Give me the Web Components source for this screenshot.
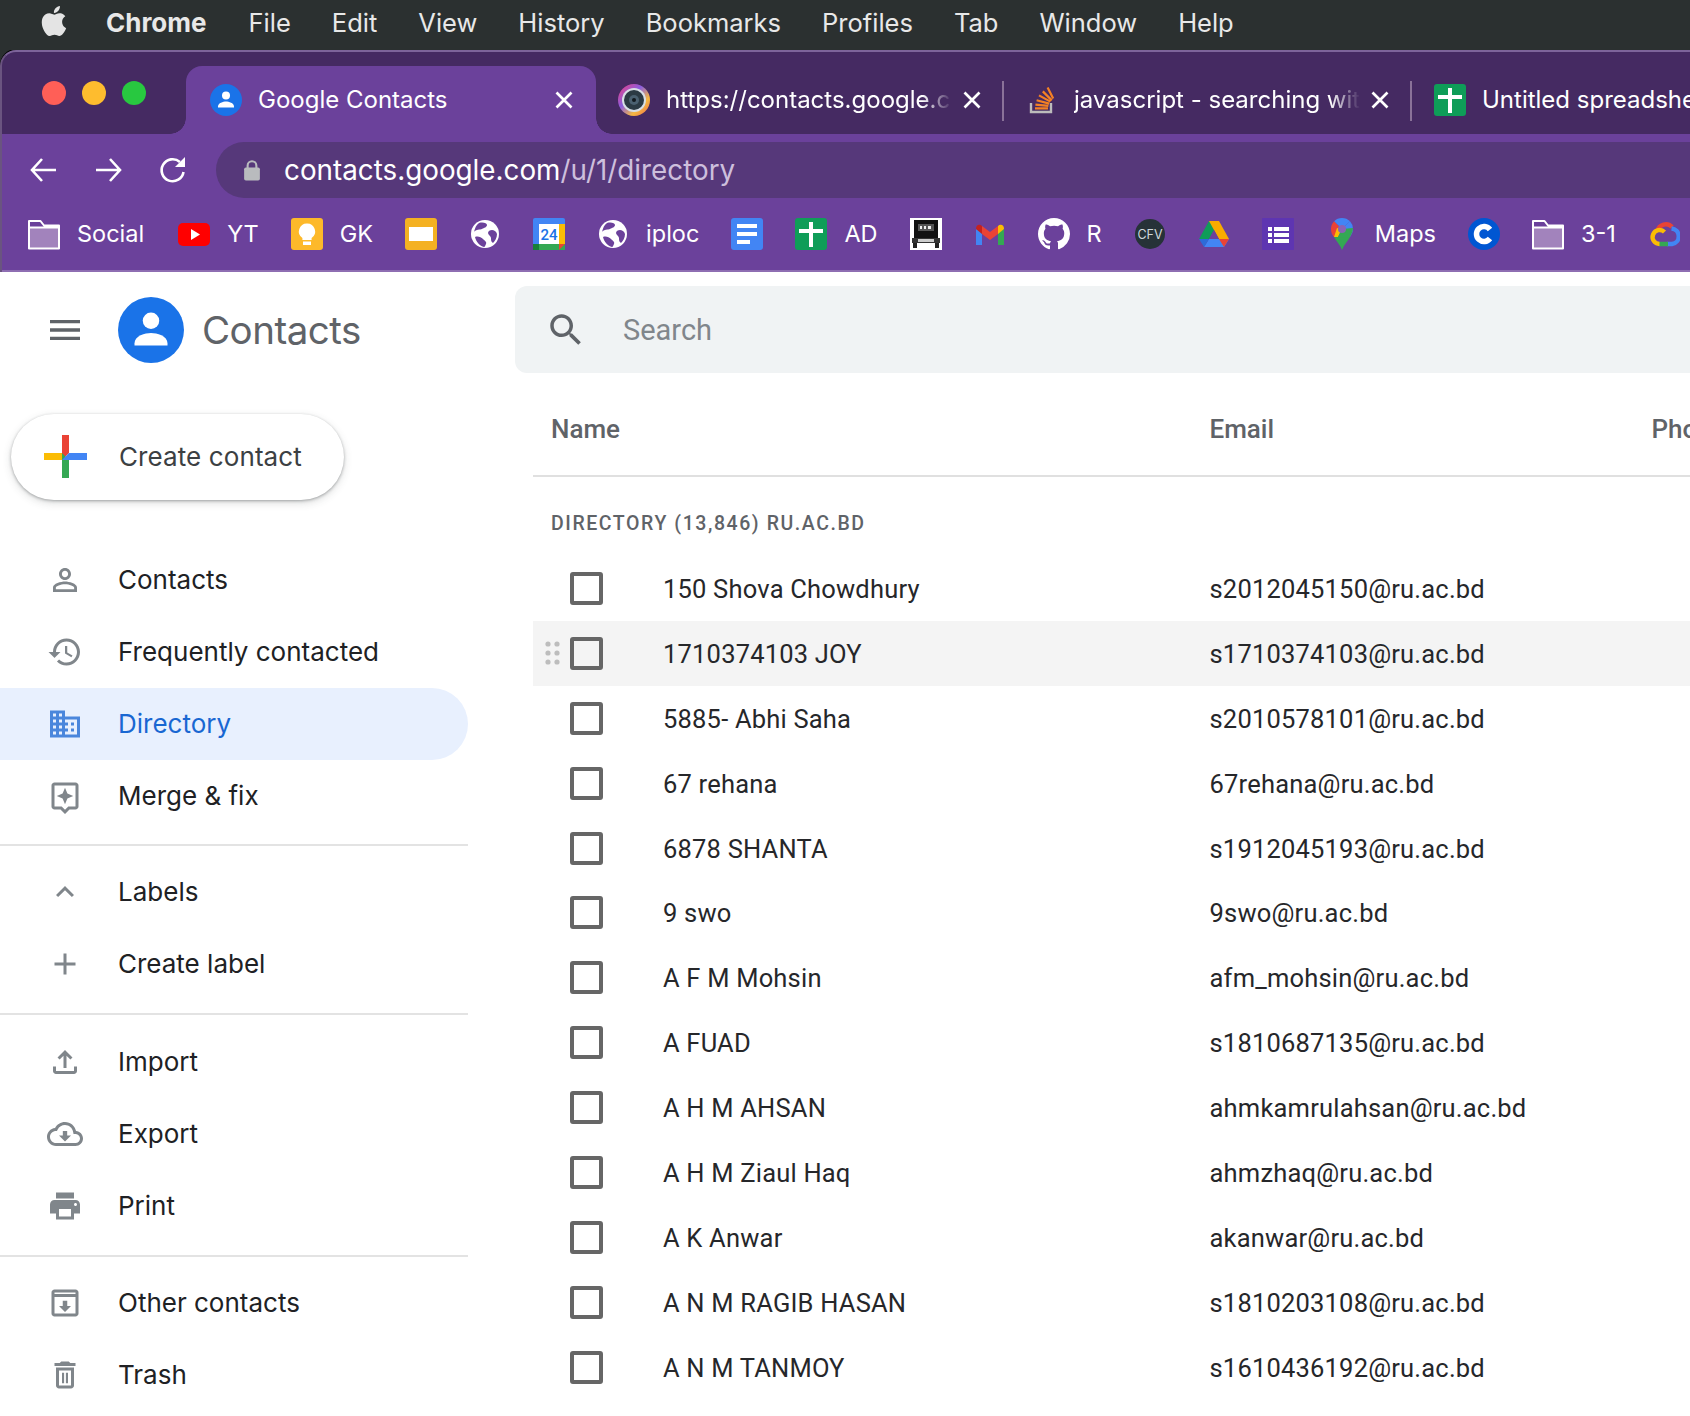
<!DOCTYPE html>
<html>
<head>
<meta charset="utf-8">
<title>Google Contacts</title>
<style>
  html, body { margin: 0; padding: 0; background: white; }
  body { display: flex; flex-direction: column; height: 1416px; width: 1690px; overflow: hidden; font-family: 'Inter', sans-serif; }
</style>
</head>
<body>

<mac-menubar></mac-menubar>

<browser-frame>
  <chrome-tab slot="tabs" active icon="contacts" text="Google Contacts"></chrome-tab>
  <chrome-tab slot="tabs" icon="lens" text="https://contacts.google.c"></chrome-tab>
  <chrome-tab slot="tabs" icon="stack" text="javascript - searching wit"></chrome-tab>
  <chrome-tab slot="tabs" icon="sheets" text="Untitled spreadsheet" noclose></chrome-tab>

  <bookmark-item slot="bookmarks" icon="folder" text="Social" style="margin-right: 2px"></bookmark-item>
  <bookmark-item slot="bookmarks" icon="youtube" text="YT"></bookmark-item>
  <bookmark-item slot="bookmarks" icon="keep" text="GK"></bookmark-item>
  <bookmark-item slot="bookmarks" icon="slides"></bookmark-item>
  <bookmark-item slot="bookmarks" icon="globe"></bookmark-item>
  <bookmark-item slot="bookmarks" icon="calendar"></bookmark-item>
  <bookmark-item slot="bookmarks" icon="globe" text="iploc"></bookmark-item>
  <bookmark-item slot="bookmarks" icon="docs"></bookmark-item>
  <bookmark-item slot="bookmarks" icon="sheets" text="AD"></bookmark-item>
  <bookmark-item slot="bookmarks" icon="pixel"></bookmark-item>
  <bookmark-item slot="bookmarks" icon="gmail"></bookmark-item>
  <bookmark-item slot="bookmarks" icon="github" text="R"></bookmark-item>
  <bookmark-item slot="bookmarks" icon="cfv"></bookmark-item>
  <bookmark-item slot="bookmarks" icon="drive"></bookmark-item>
  <bookmark-item slot="bookmarks" icon="forms"></bookmark-item>
  <bookmark-item slot="bookmarks" icon="maps" text="Maps"></bookmark-item>
  <bookmark-item slot="bookmarks" icon="coursera"></bookmark-item>
  <bookmark-item slot="bookmarks" icon="folder" text="3-1"></bookmark-item>
  <bookmark-item slot="bookmarks" icon="cloud"></bookmark-item>
</browser-frame>

<contacts-app>
  <contacts-sidebar slot="sidebar">
    <nav-group style="padding-bottom: 12px">
      <nav-item icon="person" text="Contacts"></nav-item>
      <nav-item icon="history" text="Frequently contacted"></nav-item>
      <nav-item icon="domain" text="Directory" active></nav-item>
      <nav-item icon="merge" text="Merge &amp; fix"></nav-item>
    </nav-group>
    <nav-group style="margin-bottom: 11px">
      <nav-item icon="less" text="Labels"></nav-item>
      <nav-item icon="add" text="Create label"></nav-item>
    </nav-group>
    <nav-group>
      <nav-item icon="upload" text="Import"></nav-item>
      <nav-item icon="clouddown" text="Export"></nav-item>
      <nav-item icon="print" text="Print"></nav-item>
    </nav-group>
    <nav-group last>
      <nav-item icon="other" text="Other contacts"></nav-item>
      <nav-item icon="trash" text="Trash"></nav-item>
    </nav-group>
  </contacts-sidebar>

  <contacts-table slot="main">
    <contact-row name="150 Shova Chowdhury" email="s2012045150@ru.ac.bd"></contact-row>
    <contact-row name="1710374103 JOY" email="s1710374103@ru.ac.bd" hover></contact-row>
    <contact-row name="5885- Abhi Saha" email="s2010578101@ru.ac.bd"></contact-row>
    <contact-row name="67 rehana" email="67rehana@ru.ac.bd"></contact-row>
    <contact-row name="6878 SHANTA" email="s1912045193@ru.ac.bd"></contact-row>
    <contact-row name="9 swo" email="9swo@ru.ac.bd"></contact-row>
    <contact-row name="A F M Mohsin" email="afm_mohsin@ru.ac.bd"></contact-row>
    <contact-row name="A FUAD" email="s1810687135@ru.ac.bd"></contact-row>
    <contact-row name="A H M AHSAN" email="ahmkamrulahsan@ru.ac.bd"></contact-row>
    <contact-row name="A H M Ziaul Haq" email="ahmzhaq@ru.ac.bd"></contact-row>
    <contact-row name="A K Anwar" email="akanwar@ru.ac.bd"></contact-row>
    <contact-row name="A N M RAGIB HASAN" email="s1810203108@ru.ac.bd"></contact-row>
    <contact-row name="A N M TANMOY" email="s1610436192@ru.ac.bd"></contact-row>
    <contact-row></contact-row>
  </contacts-table>
</contacts-app>

<script>
// Icons, all drawn on a 32 box except the material ones, which use 24
const mat = ( d ) => `<svg viewBox="0 0 24 24" width="100%" height="100%" fill="currentColor"><path d="${d}"/></svg>`;
const box = ( s ) => `<svg viewBox="0 0 32 32" width="100%" height="100%">${s}</svg>`;

const ICONS = {
  // Sidebar
  person: mat( 'M12 5.9c1.16 0 2.1.94 2.1 2.1s-.94 2.1-2.1 2.1S9.9 9.16 9.9 8s.94-2.1 2.1-2.1m0 9c2.97 0 6.1 1.46 6.1 2.1v1.1H5.9V17c0-.64 3.13-2.1 6.1-2.1M12 4C9.79 4 8 5.79 8 8s1.79 4 4 4 4-1.79 4-4-1.79-4-4-4zm0 9c-2.67 0-8 1.34-8 4v3h16v-3c0-2.66-5.33-4-8-4z' ),
  history: mat( 'M13 3c-4.97 0-9 4.03-9 9H1l3.89 3.89.07.14L9 12H6c0-3.87 3.13-7 7-7s7 3.13 7 7-3.13 7-7 7c-1.93 0-3.68-.79-4.94-2.06l-1.42 1.42C8.27 19.99 10.51 21 13 21c4.97 0 9-4.03 9-9s-4.03-9-9-9zm-1 5v5l4.28 2.54.72-1.21-3.5-2.08V8H12z' ),
  domain: mat( 'M12 7V3H2v18h20V7H12zM6 19H4v-2h2v2zm0-4H4v-2h2v2zm0-4H4V9h2v2zm0-4H4V5h2v2zm4 12H8v-2h2v2zm0-4H8v-2h2v2zm0-4H8V9h2v2zm0-4H8V5h2v2zm10 12h-8v-2h2v-2h-2v-2h2v-2h-2V9h8v10zm-2-8h-2v2h2v-2zm0 4h-2v2h2v-2z' ),
  merge: mat( 'M5 3h14c1.1 0 2 .9 2 2v14c0 1.1-.9 2-2 2h-4l-3 3-3-3H5c-1.1 0-2-.9-2-2V5c0-1.1.9-2 2-2zm0 2v14h4.8l2.2 2.2 2.2-2.2H19V5H5zm7 1.5l1.6 3.9 3.9 1.6-3.9 1.6-1.6 3.9-1.6-3.9L6.5 12l3.9-1.6L12 6.5z' ),
  less: mat( 'M12 8l-6 6 1.41 1.41L12 10.83l4.59 4.58L18 14z' ),
  add: mat( 'M19 13h-6v6h-2v-6H5v-2h6V5h2v6h6v2z' ),
  upload: mat( 'M18 15v3H6v-3H4v3c0 1.1.9 2 2 2h12c1.1 0 2-.9 2-2v-3h-2zM7 9l1.41 1.41L11 7.83V16h2V7.83l2.59 2.58L17 9l-5-5-5 5z' ),
  clouddown: mat( 'M19.35 10.04C18.67 6.59 15.64 4 12 4 9.11 4 6.6 5.64 5.35 8.04 2.34 8.36 0 10.91 0 14c0 3.31 2.69 6 6 6h13c2.76 0 5-2.24 5-5 0-2.64-2.05-4.78-4.65-4.96zM19 18H6c-2.21 0-4-1.79-4-4 0-2.05 1.53-3.76 3.56-3.97l1.07-.11.5-.95C8.08 7.14 9.94 6 12 6c2.62 0 4.88 1.86 5.39 4.43l.3 1.5 1.53.11c1.56.1 2.78 1.41 2.78 2.96 0 1.65-1.35 3-3 3zm-5.55-8h-2.9v3H8l4 4 4-4h-2.55z' ),
  print: mat( 'M19 8H5c-1.66 0-3 1.34-3 3v6h4v4h12v-4h4v-6c0-1.66-1.34-3-3-3zm-3 11H8v-5h8v5zm3-7c-.55 0-1-.45-1-1s.45-1 1-1 1 .45 1 1-.45 1-1 1zm-1-9H6v4h12V3z' ),
  other: mat( 'M5 3h14c1.1 0 2 .9 2 2v14c0 1.1-.9 2-2 2H5c-1.1 0-2-.9-2-2V5c0-1.1.9-2 2-2zm0 2v1h14V5H5zm0 3v11h14V8H5zm5.5 2.5h3V14H16l-4 4-4-4h2.5v-3.5z' ),
  trash: mat( 'M6 19c0 1.1.9 2 2 2h8c1.1 0 2-.9 2-2V7H6v12zM8 9h8v10H8V9zm7.5-5l-1-1h-5l-1 1H5v2h14V4zM10 10.5h1.4v7H10zm2.6 0H14v7h-1.4z' ),
  search: mat( 'M15.5 14h-.79l-.28-.27C15.41 12.59 16 11.11 16 9.5 16 5.91 13.09 3 9.5 3S3 5.91 3 9.5 5.91 16 9.5 16c1.61 0 3.09-.59 4.23-1.57l.27.28v.79l5 4.99L20.49 19l-4.99-5zm-6 0C7.01 14 5 11.99 5 9.5S7.01 5 9.5 5 14 7.01 14 9.5 11.99 14 9.5 14z' ),
  menu: mat( 'M3 18h18v-2H3v2zm0-5h18v-2H3v2zm0-7v2h18V6H3z' ),

  // Browser chrome
  apple: mat( 'M18.71 19.5c-.83 1.24-1.71 2.45-3.05 2.47-1.34.03-1.77-.79-3.29-.79-1.53 0-2 .77-3.27.82-1.31.05-2.3-1.32-3.14-2.53C4.25 17 2.94 12.45 4.7 9.39c.87-1.52 2.43-2.48 4.12-2.51 1.28-.02 2.5.87 3.29.87.78 0 2.26-1.07 3.81-.91.65.03 2.47.26 3.64 1.98-.09.06-2.17 1.28-2.15 3.81.03 3.02 2.65 4.03 2.68 4.04-.03.07-.42 1.44-1.38 2.83M13 3.5c.73-.83 1.94-1.46 2.94-1.5.13 1.17-.34 2.35-1.04 3.19-.69.85-1.83 1.51-2.95 1.42-.15-1.15.41-2.35 1.05-3.11z' ),
  back: box( '<path d="M28 16H5M14 5L4 16l10 11" fill="none" stroke="currentColor" stroke-width="2.6"/>' ),
  forward: box( '<path d="M3 16h23M17 5l10 11-10 11" fill="none" stroke="currentColor" stroke-width="2.6"/>' ),
  reload: box( '<path d="M26.5 18a11 11 0 1 1-3.6-10" fill="none" stroke="currentColor" stroke-width="2.6"/><path d="M28 3v10H18z" fill="currentColor"/>' ),
  lock: box( '<path d="M11 14v-3a5 5 0 0 1 10 0v3" fill="none" stroke="currentColor" stroke-width="2.4"/><rect x="7" y="13" width="18" height="15" rx="2" fill="currentColor"/>' ),
  close: box( '<path d="M6 6l20 20M26 6L6 26" fill="none" stroke="currentColor" stroke-width="3.6"/>' ),

  // Favicons
  contacts: box( '<circle cx="16" cy="16" r="16" fill="#1a73e8"/><circle cx="16" cy="11.5" r="4" fill="#fff"/><path d="M8 22.5c0-3.6 5.2-5 8-5s8 1.4 8 5v1H8z" fill="#fff"/>' ),
  lens: box( '<defs><linearGradient id="lg" x1="0" y1="0" x2="1" y2="1"><stop offset="0" stop-color="#ef3f7c"/><stop offset=".4" stop-color="#8b5de0"/><stop offset=".7" stop-color="#f5b942"/><stop offset="1" stop-color="#f06a4a"/></linearGradient></defs><circle cx="16" cy="16" r="16" fill="url(#lg)"/><circle cx="16" cy="16" r="12" fill="#d8dfe6"/><circle cx="16" cy="16" r="10" fill="#2b3a44"/><circle cx="16" cy="16" r="5" fill="#4a6070"/><circle cx="16" cy="16" r="2" fill="#10181e"/>' ),
  stack: box( '<path d="M6 19v9h20v-9" fill="none" stroke="#bcbbbb" stroke-width="2.4" transform="translate(-1 0)"/><path d="M9 24.4h13M9.4 20.6l13 1.2M10.6 16.2l12.6 3.4M13 11.4l11.4 6.2M16.8 7.4l9 9M21.6 3.6l5.6 11" fill="none" stroke="#f48024" stroke-width="2.2"/>' ),
  folder: box( '<path d="M1 9h30v21.5H1z" fill="#a283bc"/><path d="M1 8.5V3h11.5l3.5 4.5h15v23H1z M1 9.5h30" fill="none" stroke="#fff" stroke-width="2" stroke-linejoin="round"/>' ),
  youtube: box( '<rect y="5" width="32" height="23" rx="5" fill="#f00"/><path d="M13 11l9 5.5-9 5.5z" fill="#fff"/>' ),
  keep: box( '<rect width="32" height="32" rx="3" fill="#fdb92a"/><path d="M16 5.5a8 8 0 0 0-4.6 14.6V22h9.2v-1.9A8 8 0 0 0 16 5.5z" fill="#fff"/><rect x="12" y="23.5" width="8" height="3.5" fill="#fff"/>' ),
  slides: box( '<rect width="32" height="32" rx="3" fill="#f4b122"/><rect x="4" y="9" width="24" height="14" fill="#fff"/>' ),
  globe: box( '<circle cx="16" cy="16" r="14" fill="#fff"/><path d="M10 5c4-1 8 0 8 2s-3 3-5 4-6 0-8 3c1-4 2-7 5-9zM23 12c2 0 4 1 5 4 0 4-2 7-4 9-2-1-2-3-2-5s-3-3-3-5 2-3 4-3zM6 19c3-1 6 0 8 2s4 3 3 5-1 3-2 3c-4-1-8-5-9-10z" fill="#6b419b"/>' ),
  calendar: box( '<rect width="32" height="32" rx="2" fill="#4285f4"/><rect x="25.5" y="6" width="6.5" height="20" fill="#fbbc04"/><rect y="26" width="32" height="6" fill="#34a853"/><rect y="26" width="6" height="6" fill="#188038"/><path d="M26 26h6l-6 6z" fill="#ea4335"/><rect x="6" y="6" width="20" height="20" fill="#fff"/><text x="16" y="22" font-family="Roboto" font-size="15" font-weight="500" text-anchor="middle" fill="#1a73e8">24</text>' ),
  docs: box( '<rect width="32" height="32" rx="3" fill="#4285f4"/><path d="M6 6h20v4H6zM6 14h20v4H6zM6 22h13v4H6z" fill="#fff"/>' ),
  sheets: box( '<rect width="32" height="32" rx="3" fill="#0f9d58"/><path d="M4 11h24v4H4zM14 4h4v25h-4z" fill="#fff"/>' ),
  pixel: box( '<rect width="32" height="32" fill="#fff"/><rect x="4" y="2" width="24" height="18" fill="#111"/><rect x="8" y="6" width="16" height="7" fill="#555"/><path d="M10 8h2v3h-2zM14 8h2v3h-2zM18 8h3v3h-3z" fill="#eee"/><rect x="2" y="20" width="28" height="5" fill="#333"/><rect x="8" y="21" width="16" height="3" fill="#ccc"/><path d="M3 25h4v5H3zM25 25h4v5h-4z" fill="#222"/>' ),
  gmail: box( '<path d="M2 11v16h6V14z" fill="#4285f4"/><path d="M24 14v13h6V11z" fill="#34a853"/><path d="M8 8v8l8 6 8-6V8l-8 6z" fill="#ea4335"/><path d="M2 11c0-5 4-5 6-3v8l-6-5z" fill="#c5221f"/><path d="M30 11c0-5-4-5-6-3v8l6-5z" fill="#fbbc04"/>' ),
  github: `<svg viewBox="0 0 16 16" width="100%" height="100%" fill="#fff"><path d="M8 0C3.58 0 0 3.58 0 8c0 3.54 2.29 6.53 5.47 7.59.4.07.55-.17.55-.38 0-.19-.01-.82-.01-1.49-2.01.37-2.53-.49-2.69-.94-.09-.23-.48-.94-.82-1.13-.28-.15-.68-.52-.01-.53.63-.01 1.08.58 1.23.82.72 1.21 1.87.87 2.33.66.07-.52.28-.87.51-1.07-1.78-.2-3.64-.89-3.64-3.95 0-.87.31-1.59.82-2.15-.08-.2-.36-1.02.08-2.12 0 0 .67-.21 2.2.82.64-.18 1.32-.27 2-.27.68 0 1.36.09 2 .27 1.53-1.04 2.2-.82 2.2-.82.44 1.1.16 1.92.08 2.12.51.56.82 1.27.82 2.15 0 3.07-1.87 3.75-3.65 3.95.29.25.54.73.54 1.48 0 1.07-.01 1.93-.01 2.2 0 .21.15.46.55.38A8.013 8.013 0 0016 8c0-4.42-3.58-8-8-8z"/></svg>`,
  cfv: box( '<circle cx="16" cy="16" r="15" fill="#263238"/><text x="16" y="20.5" font-family="Inter" font-size="12.5" text-anchor="middle" fill="#cfd8dc">CFV</text>' ),
  drive: box( '<path d="M11 3h10l-5 9-5 9H1z" fill="#0f9d58"/><path d="M21 3l10 18H21L11 3z" fill="#f9ab00"/><path d="M11 21h20l-5 8H6z" fill="#4285f4"/><path d="M1 21l5 8 5-8z" fill="#2d6bd8"/><path d="M31 21l-5 8-5-8z" fill="#ea4335"/><path d="M16 12l5 9H11z" fill="#6b419b"/>' ),
  forms: box( '<rect width="32" height="32" rx="1" fill="#5e35b1"/><path d="M6 9h4v4H6zM12 9h15v4H12zM6 15h4v4H6zM12 15h15v4H12zM6 21h4v4H6zM12 21h15v4H12z" fill="#fff"/>' ),
  maps: box( '<path d="M16 32c-2-5-5-8-8-13l8-2 8 2c-3 5-6 8-8 13z" fill="#34a853"/><path d="M8 19c-2-2-3-5-3-8a11 11 0 0 1 3.2-7.8L16 11z" fill="#ea4335"/><path d="M16 11l-4 8-4 0 3-9z" fill="#fbbc04"/><path d="M8.2 3.2A11 11 0 0 1 16 0c3 0 6 1.2 8 3.3L16 11z" fill="#4285f4"/><path d="M24 3.3A11 11 0 0 1 27 11c0 3-1.5 5.5-3 8L16 11z" fill="#4285f4"/><path d="M27 10c0 4-2 6.5-3 9l-8 1-4-1 4-8z" fill="#34a853"/><circle cx="16" cy="11" r="4" fill="#8a63b5"/>' ),
  coursera: box( '<circle cx="16" cy="16" r="16" fill="#0056d2"/><path d="M22 11.5a7.5 7.5 0 1 0 0 9" fill="none" stroke="#fff" stroke-width="5.5"/>' ),
  cloud: box( '<path d="M9.5 13A8.5 8.5 0 0 1 24 9" fill="none" stroke="#ea4335" stroke-width="4.4"/><path d="M23.500 10.500a7.800 7.800 0 0 1 .500 15.500h-5" fill="none" stroke="#4285f4" stroke-width="4.400"/><path d="M20 26H11" fill="none" stroke="#34a853" stroke-width="4.400"/><path d="M11.500 26a7 7 0 1 1 5-12" fill="none" stroke="#fbbc04" stroke-width="4.400"/>' )
};

// Draws one of the icons above
class AppIcon extends HTMLElement {
  constructor() {
    super();

    const shadowRoot = this.attachShadow( {mode: 'open'} );
    shadowRoot.innerHTML = `
      <style>
        :host {
          display: block;
          flex: none;
          height: var( --icon-height, 32px );
          width: var( --icon-width, 32px );
        }

        svg { display: block; }
      </style>
      ${ICONS[this.getAttribute( 'name' )] || ''}
    `;
  }
}

window.customElements.define( 'app-icon', AppIcon );

class MacMenubar extends HTMLElement {
  constructor() {
    super();

    const items = ['File', 'Edit', 'View', 'History', 'Bookmarks', 'Profiles', 'Tab', 'Window', 'Help'];
    const shadowRoot = this.attachShadow( {mode: 'open'} );
    shadowRoot.innerHTML = `
      <style>
        :host {
          align-items: center;
          background: #2b3030;
          box-sizing: border-box;
          color: #e8e8e8;
          display: flex;
          flex: none;
          font-family: 'Inter', sans-serif;
          font-size: 25.500px;
          gap: 41px;
          height: 50px;
          padding: 0 0 5px 37px;
        }

        app-icon { --icon-height: 36px; --icon-width: 36px; margin: -3px -7px 0 -1px; color: #e4e4e4; }
        b { font-size: 26px; font-weight: 700; margin-right: 1px; }
      </style>
      <app-icon name="apple"></app-icon>
      <b>Chrome</b>
      ${items.map( ( item ) => `<span>${item}</span>` ).join( '' )}
    `;
  }
}

window.customElements.define( 'mac-menubar', MacMenubar );

class ChromeTab extends HTMLElement {
  constructor() {
    super();

    const shadowRoot = this.attachShadow( {mode: 'open'} );
    shadowRoot.innerHTML = `
      <style>
        :host {
          align-items: center;
          box-sizing: border-box;
          color: white;
          display: flex;
          flex: none;
          font-family: 'Inter', sans-serif;
          font-size: 24px;
          height: 68px;
          padding: 0 20px 0 22px;
          position: relative;
          width: 408px;
        }

        :host( [active] ) {
          background: #6b419b;
          border-radius: 16px 16px 0 0;
          padding-left: 24px;
          width: 410px;
        }

        :host( [active] )::before,
        :host( [active] )::after {
          bottom: 0;
          content: '';
          height: 16px;
          position: absolute;
          width: 16px;
        }

        :host( [active] )::before {
          background: radial-gradient( circle at 0 0, transparent 15.5px, #6b419b 16px );
          left: -16px;
        }

        :host( [active] )::after {
          background: radial-gradient( circle at 100% 0, transparent 15.5px, #6b419b 16px );
          right: -16px;
        }

        :host( :not( [active] ):not( :last-child ) )::after {
          background: #8a7299;
          content: '';
          height: 40px;
          position: absolute;
          right: 0;
          top: 15px;
          width: 2px;
        }

        .title {
          flex: 1;
          margin-left: 16px;
          min-width: 0;
          overflow: hidden;
          padding-bottom: 2px;
          white-space: nowrap;
        }

        :host( :not( [active] ):not( [noclose] ) ) .title {
          -webkit-mask-image: linear-gradient( to right, black calc( 100% - 30px ), transparent );
          mask-image: linear-gradient( to right, black calc( 100% - 30px ), transparent );
        }

        .close { --icon-height: 24px; --icon-width: 24px; margin-left: 8px; color: white; }
      </style>
      <app-icon name="${this.getAttribute( 'icon' )}"></app-icon>
      <span class="title">${this.getAttribute( 'text' )}</span>
      ${this.hasAttribute( 'noclose' ) ? '' : '<app-icon class="close" name="close"></app-icon>'}
    `;
  }
}

window.customElements.define( 'chrome-tab', ChromeTab );

class BookmarkItem extends HTMLElement {
  constructor() {
    super();

    const text = this.getAttribute( 'text' );
    const shadowRoot = this.attachShadow( {mode: 'open'} );
    shadowRoot.innerHTML = `
      <style>
        :host {
          align-items: center;
          color: white;
          display: flex;
          flex: none;
          font-family: 'Inter', sans-serif;
          font-size: 23.500px;
          gap: 17px;
          height: 32px;
        }

        span { padding-bottom: 2px; }
      </style>
      <app-icon name="${this.getAttribute( 'icon' )}"></app-icon>
      ${text === null ? '' : `<span>${text}</span>`}
    `;
  }
}

window.customElements.define( 'bookmark-item', BookmarkItem );

class BrowserFrame extends HTMLElement {
  constructor() {
    super();

    const shadowRoot = this.attachShadow( {mode: 'open'} );
    shadowRoot.innerHTML = `
      <style>
        :host {
          background: #2b3030;
          display: block;
          flex: none;
          overflow: hidden;
        }

        .window {
          background: #452a62;
          border-left: 2px solid #6a5480;
          border-radius: 16px 0 0 0;
          border-top: 2px solid #7d649a;
          box-shadow: 0 -1px 0 #000;
          overflow: hidden;
        }

        .strip {
          align-items: flex-end;
          box-sizing: border-box;
          display: flex;
          height: 82px;
          padding-left: 184px;
          position: relative;
        }

        .lights {
          display: flex;
          gap: 16px;
          left: 40px;
          position: absolute;
          top: 29px;
        }

        .lights i {
          border-radius: 50%;
          display: block;
          height: 24px;
          width: 24px;
        }

        .toolbar {
          align-items: center;
          background: #6b419b;
          box-sizing: border-box;
          color: white;
          display: flex;
          height: 64px;
          margin-left: -2px;
          padding: 8px 0 0 28px;
        }

        .toolbar > app-icon { margin-right: 32.500px; }

        .omnibox {
          align-items: center;
          background: #56387a;
          border-radius: 28px 0 0 28px;
          display: flex;
          flex: 1;
          font-family: 'Inter', sans-serif;
          font-size: 27.800px;
          height: 56px;
          margin-left: -5.500px;
          padding-left: 22px;
        }

        .omnibox app-icon { --icon-height: 28px; --icon-width: 28px; color: #b9bbbe; margin-right: 18px; }
        .omnibox span { color: #cdbfdc; }
        .omnibox b { color: white; font-weight: 400; }

        .bookmarks {
          align-items: center;
          background: #6b419b;
          border-bottom: 2px solid #8e6eb2;
          display: flex;
          gap: 32px;
          height: 72px;
          margin-left: -2px;
          padding-left: 28px;
        }
      </style>
      <div class="window">
        <div class="strip">
          <div class="lights">
            <i style="background: #ff5f57"></i>
            <i style="background: #febc2e"></i>
            <i style="background: #28c840"></i>
          </div>
          <slot name="tabs"></slot>
        </div>
        <div class="toolbar">
          <app-icon name="back"></app-icon>
          <app-icon name="forward"></app-icon>
          <app-icon name="reload"></app-icon>
          <div class="omnibox">
            <app-icon name="lock"></app-icon>
            <span><b>contacts.google.com</b>/u/1/directory</span>
          </div>
        </div>
        <div class="bookmarks"><slot name="bookmarks"></slot></div>
      </div>
    `;
  }
}

window.customElements.define( 'browser-frame', BrowserFrame );

class NavItem extends HTMLElement {
  constructor() {
    super();

    const shadowRoot = this.attachShadow( {mode: 'open'} );
    shadowRoot.innerHTML = `
      <style>
        :host {
          align-items: center;
          border-radius: 0 36px 36px 0;
          color: #202124;
          display: flex;
          height: 72px;
          padding-left: 47px;
          width: 421px;
        }

        :host( [active] ) {
          background: #e8f0fe;
          color: #1967d2;
        }

        app-icon {
          --icon-height: 36px;
          --icon-width: 36px;
          color: #80868b;
          margin-right: 35px;
        }

        :host( [active] ) app-icon { color: #4a86dc; }

        span {
          font-family: 'Inter', sans-serif;
          font-size: 26px;
          padding-bottom: 2px;
        }
      </style>
      <app-icon name="${this.getAttribute( 'icon' )}"></app-icon>
      <span>${this.getAttribute( 'text' )}</span>
    `;
  }
}

window.customElements.define( 'nav-item', NavItem );

class NavGroup extends HTMLElement {
  constructor() {
    super();

    const shadowRoot = this.attachShadow( {mode: 'open'} );
    shadowRoot.innerHTML = `
      <style>
        :host {
          border-bottom: 2px solid #e3e3e3;
          display: block;
          margin-bottom: 10px;
          padding-bottom: 13px;
          width: 468px;
        }

        :host( [last] ) { border-bottom: none; }
      </style>
      <slot></slot>
    `;
  }
}

window.customElements.define( 'nav-group', NavGroup );

class ContactsSidebar extends HTMLElement {
  constructor() {
    super();

    const shadowRoot = this.attachShadow( {mode: 'open'} );
    shadowRoot.innerHTML = `
      <style>
        :host {
          display: block;
          flex: none;
          width: 515px;
        }

        .brand {
          align-items: center;
          display: flex;
          height: 116px;
          padding-left: 45px;
        }

        .brand .burger { --icon-height: 40px; --icon-width: 40px; color: #5f6368; margin-right: 33px; }
        .brand .logo { --icon-height: 66px; --icon-width: 66px; margin-right: 18px; }

        .brand span {
          color: #5f6368;
          font-family: 'Inter', sans-serif;
          font-size: 38.500px;
          letter-spacing: -0.500px;
        }

        .create {
          align-items: center;
          background: white;
          border-radius: 43px;
          box-shadow: 0 1px 3px rgba( 60, 64, 67, 0.4 ), 0 3px 8px rgba( 60, 64, 67, 0.18 );
          box-sizing: border-box;
          color: #3c4043;
          display: flex;
          font-family: 'Inter', sans-serif;
          font-size: 26px;
          height: 86px;
          letter-spacing: 0.100px;
          line-height: 28px;
          margin: 26px 0 44px 11px;
          padding: 0 0 1px 33px;
          width: 333px;
        }

        .create svg { display: block; margin-right: 32px; }
      </style>
      <div class="brand">
        <app-icon class="burger" name="menu"></app-icon>
        <app-icon class="logo" name="contacts"></app-icon>
        <span>Contacts</span>
      </div>
      <div class="create">
        <svg width="43" height="43" viewBox="0 0 43 43">
          <path d="M18 0h7v18l-7 7z" fill="#ea4335"/>
          <path d="M18 18l7 7v18h-7z" fill="#34a853"/>
          <path d="M0 18h18v7H0z" fill="#fbbc04"/>
          <path d="M18 25l7-7h18v7z" fill="#4285f4"/>
        </svg>
        Create contact
      </div>
      <slot></slot>
    `;
  }
}

window.customElements.define( 'contacts-sidebar', ContactsSidebar );

class ContactRow extends HTMLElement {
  constructor() {
    super();

    const name = this.getAttribute( 'name' ) || '';
    const email = this.getAttribute( 'email' ) || '';
    const shadowRoot = this.attachShadow( {mode: 'open'} );
    shadowRoot.innerHTML = `
      <style>
        :host {
          align-items: center;
          color: #26272a;
          display: grid;
          font-family: 'Roboto', sans-serif;
          font-size: 25.500px;
          grid-template-columns: 130px 546.500px 1fr;
          height: 64.900px;
          letter-spacing: 0.200px;
          position: relative;
        }

        :host( [hover] ) { background: #f4f4f4; }

        .text { padding-top: 1px; }

        .check {
          border: 4px solid #666;
          border-radius: 3px;
          box-sizing: border-box;
          height: 33px;
          margin-left: 37px;
          width: 33px;
        }

        .drag {
          display: none;
          height: 24px;
          left: 12px;
          position: absolute;
          top: 20px;
          width: 15px;
        }

        :host( [hover] ) .drag { display: block; }
      </style>
      <svg class="drag" viewBox="0 0 15 24" fill="#bdbdbd">
        <circle cx="3" cy="3" r="2.600"/><circle cx="12" cy="3" r="2.600"/>
        <circle cx="3" cy="12" r="2.600"/><circle cx="12" cy="12" r="2.600"/>
        <circle cx="3" cy="21" r="2.600"/><circle cx="12" cy="21" r="2.600"/>
      </svg>
      <div class="check"></div>
      <div class="text">${name}</div>
      <div class="text">${email}</div>
    `;
  }
}

window.customElements.define( 'contact-row', ContactRow );

class ContactsTable extends HTMLElement {
  constructor() {
    super();

    const shadowRoot = this.attachShadow( {mode: 'open'} );
    shadowRoot.innerHTML = `
      <style>
        :host {
          display: block;
          flex: 1;
          min-width: 0;
          overflow: hidden;
          padding-top: 14px;
        }

        .search {
          align-items: center;
          background: #f0f3f4;
          border-radius: 12px 0 0 12px;
          color: #80868b;
          display: flex;
          font-family: 'Roboto', sans-serif;
          font-size: 29px;
          height: 87px;
          padding-left: 30px;
        }

        .search app-icon { --icon-height: 42px; --icon-width: 42px; color: #5f6368; margin-right: 36px; }

        .list { margin-left: 18px; }

        .head {
          align-items: center;
          border-bottom: 2px solid #e0e0e0;
          color: #5f6368;
          display: grid;
          font-family: 'Roboto', sans-serif;
          font-size: 26px;
          font-weight: 500;
          grid-template-columns: 658.500px 442px 1fr;
          height: 92px;
          padding: 10px 0 0 18px;
        }

        .head span { white-space: nowrap; }

        .section {
          color: #5f6368;
          font-family: 'Roboto', sans-serif;
          font-size: 19.500px;
          font-weight: 500;
          height: 79px;
          letter-spacing: 1.570px;
          line-height: 93px;
          padding-left: 18px;
        }
      </style>
      <div class="search">
        <app-icon name="search"></app-icon>
        <span>Search</span>
      </div>
      <div class="list">
        <div class="head"><span>Name</span><span>Email</span><span>Pho</span></div>
        <div class="section">DIRECTORY (13,846) RU.AC.BD</div>
        <slot></slot>
      </div>
    `;
  }
}

window.customElements.define( 'contacts-table', ContactsTable );

class ContactsApp extends HTMLElement {
  constructor() {
    super();

    const shadowRoot = this.attachShadow( {mode: 'open'} );
    shadowRoot.innerHTML = `
      <style>
        :host {
          background: white;
          display: flex;
          flex: 1;
          min-height: 0;
          overflow: hidden;
        }
      </style>
      <slot name="sidebar"></slot>
      <slot name="main"></slot>
    `;
  }
}

window.customElements.define( 'contacts-app', ContactsApp );
</script>
</body>
</html>
